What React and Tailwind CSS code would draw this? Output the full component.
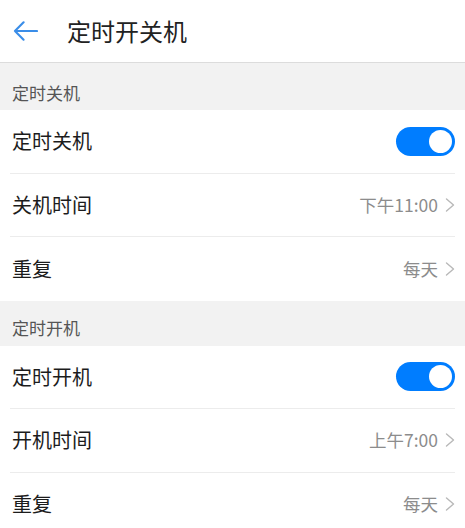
import React, { useState } from 'react'

// Back arrow (thin, blue)
function BackIcon({ className }) {
  return (
    <svg className={className} viewBox="0 0 26 22" fill="none" stroke="currentColor" strokeWidth={2.2}>
      <path strokeLinecap="round" strokeLinejoin="round" d="M25 11H2M11 2L2 11l9 9" />
    </svg>
  )
}

function Chevron() {
  return (
    <svg className="w-[10px] h-[14px] text-[#b8b8b8] ml-[7px]" viewBox="0 0 10 14" fill="none" stroke="currentColor" strokeWidth={1.4}>
      <path strokeLinecap="round" strokeLinejoin="round" d="M1.5 1l7 6-7 6" />
    </svg>
  )
}

function Toggle({ on, onChange }) {
  return (
    <button
      onClick={() => onChange(!on)}
      className={`w-[59px] h-[29px] rounded-full flex items-center px-[3px] ${on ? 'bg-[#007dff] justify-end' : 'bg-[#d5d5d5] justify-start'}`}
    >
      <span className="w-[23px] h-[23px] rounded-full bg-white" />
    </button>
  )
}

function SectionTitle({ children, className }) {
  return (
    <div className={`bg-[#f2f2f2] flex items-center px-3 text-[17px] text-[#555] ${className}`}>
      {children}
    </div>
  )
}

function Row({ label, last, children }) {
  return (
    <div className="px-[10px] bg-white">
      <div className={`h-[63.5px] flex items-center justify-between pl-[2px] ${last ? '' : 'border-b border-[#ececec]'}`}>
        <span className="text-[20px] text-[#1c1c1c]">{label}</span>
        <div className="flex items-center">{children}</div>
      </div>
    </div>
  )
}

function ValueRow({ label, value, last }) {
  return (
    <Row label={label} last={last}>
      <span className="text-[17.5px] text-[#8c8c8c]">{value}</span>
      <Chevron />
    </Row>
  )
}

export default function App() {
  const [offOn, setOffOn] = useState(true)
  const [bootOn, setBootOn] = useState(true)

  return (
    <div
      className="w-[465px] h-[528px] overflow-hidden bg-white"
      style={{ fontFamily: '"Noto Sans CJK SC", "Noto Sans", sans-serif' }}
    >
      {/* Header */}
      <div className="h-[63px] flex items-center border-b border-[#dcdcdc] shadow-[0_1px_2px_rgba(0,0,0,0.06)]">
        <BackIcon className="w-[25px] h-[22px] ml-[13px] text-[#3a8de8]" />
        <h1 className="ml-[29px] text-[24px] text-[#222]">定时开关机</h1>
      </div>

      <SectionTitle className="h-[47px] pt-[13px]">定时关机</SectionTitle>
      <Row label="定时关机">
        <Toggle on={offOn} onChange={setOffOn} />
      </Row>
      <ValueRow label="关机时间" value="下午11:00" />
      <ValueRow label="重复" value="每天" last />

      <SectionTitle className="h-[45px] pt-[10px]">定时开机</SectionTitle>
      <Row label="定时开机">
        <Toggle on={bootOn} onChange={setBootOn} />
      </Row>
      <ValueRow label="开机时间" value="上午7:00" />
      <ValueRow label="重复" value="每天" last />
    </div>
  )
}
